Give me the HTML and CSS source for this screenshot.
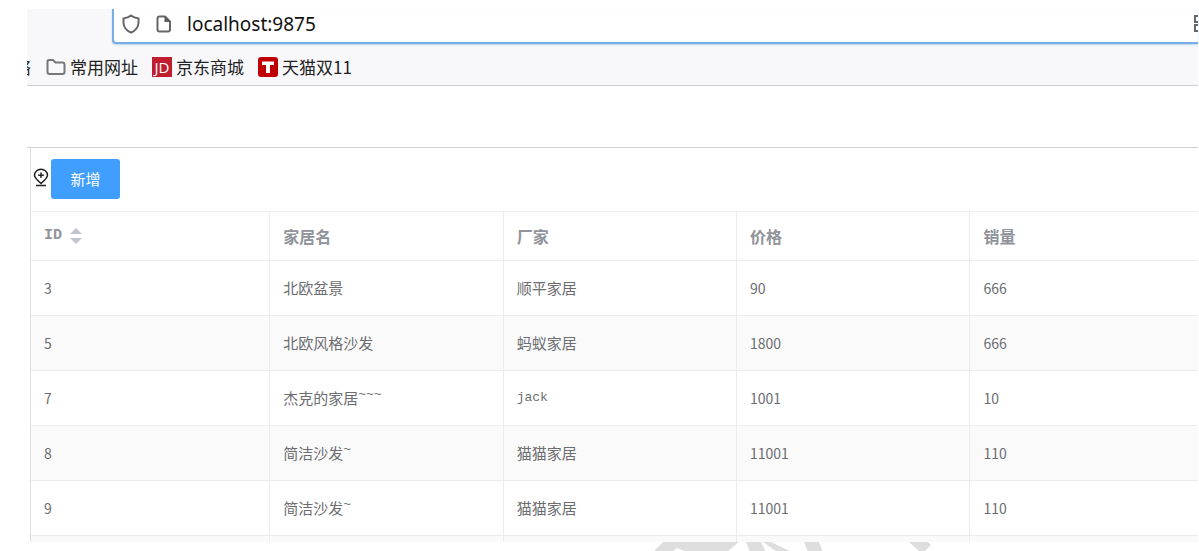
FILE: index.html
```html
<!DOCTYPE html>
<html lang="zh-CN">
<head>
<meta charset="utf-8">
<title>家居管理</title>
<link rel="stylesheet" href="styles.css">
</head>
<body>
<main class="capture">
  <header class="browser">
    <div class="address">
      <svg class="shield" viewBox="0 0 20 20" aria-hidden="true"><path d="M10 1.500Q13 4 17.500 4.500V9Q17 15.500 10 18.700Q3 15.500 2.500 9V4.500Q7 4 10 1.500Z"/></svg>
      <svg class="page-icon" viewBox="0 0 16 18" aria-hidden="true"><path d="M3.500 1.500H9L14 6.500V14.500Q14 16.500 12 16.500H3.500Q1.500 16.500 1.500 14.500V3.500Q1.500 1.500 3.500 1.500Z"/><path class="fold" d="M8.500 1V7H14.500Z"/></svg>
      <input class="url" type="text" value="localhost:9875" aria-label="地址">
      <svg class="qr" viewBox="0 0 4 20" aria-hidden="true"><path d="M5 2H1V8H5M5 11H1V17H5"/></svg>
    </div>
    <nav class="bookmarks">
      <span class="cut"><span>络</span></span>
      <a href="#"><svg class="folder" viewBox="0 0 20 18" aria-hidden="true"><path d="M1.500 3.500Q1.500 2 3 2H7L9.500 4.500H16.500Q18.500 4.500 18.500 6.500V14Q18.500 16 16.500 16H3.500Q1.500 16 1.500 14Z"/></svg>常用网址</a>
      <a href="#"><span class="logo jd">JD</span>京东商城</a>
      <a href="#"><span class="logo tmall"><svg viewBox="0 0 20 20" aria-hidden="true"><path d="M4 4.500H16V8H12V16H8V8H4Z"/></svg></span>天猫双11</a>
    </nav>
  </header>
  <section class="app">
    <div class="toolbar">
      <svg class="pin" viewBox="0 0 16 20" aria-hidden="true"><path d="M8 15.500C4.500 12.500 1.500 10 1.500 7.300A6.500 6 0 0 1 14.500 7.300C14.500 10 11.500 12.500 8 15.500ZM5.200 7.300H10.800M8 4.500V10.100M3 17.500H13"/></svg>
      <button class="add" type="button">新增</button>
    </div>
    <table class="grid">
      <colgroup><col class="wide"><col class="mid"><col class="mid"><col class="mid"><col></colgroup>
      <thead>
        <tr><th><span class="sortable">ID<svg class="sort" viewBox="0 0 12 16" aria-hidden="true"><path d="M0 6L6 0L12 6ZM0 10H12L6 16Z"/></svg></span></th><th>家居名</th><th>厂家</th><th>价格</th><th>销量</th></tr>
      </thead>
      <tbody>
        <tr><td class="num">3</td><td>北欧盆景</td><td>顺平家居</td><td class="num">90</td><td class="num">666</td></tr>
        <tr><td class="num">5</td><td>北欧风格沙发</td><td>蚂蚁家居</td><td class="num">1800</td><td class="num">666</td></tr>
        <tr><td class="num">7</td><td>杰克的家居<span class="tilde">~~~</span></td><td class="latin">jack</td><td class="num">1001</td><td class="num">10</td></tr>
        <tr><td class="num">8</td><td>简洁沙发<span class="tilde">~</span></td><td>猫猫家居</td><td class="num">11001</td><td class="num">110</td></tr>
        <tr><td class="num">9</td><td>简洁沙发<span class="tilde">~</span></td><td>猫猫家居</td><td class="num">11001</td><td class="num">110</td></tr>
        <tr class="peek"><td></td><td></td><td></td><td></td><td></td></tr>
      </tbody>
    </table>
  </section>
</main>
<div class="watermark"><svg viewBox="0 0 290 10" aria-hidden="true"><path d="M12 0H57L60 10H36L26 6L21 10H2ZM57 0H88L76 10H60ZM95 0H110L115 10H99ZM112 0H120L141 10H126ZM153 0H168L172 10H157ZM258 0H277L280 3L273 10H269Z"/></svg></div>
</body>
</html>
```
FILE: styles.css
```css
* { box-sizing: border-box; }
body { margin: 0; background: #fff; font-family: "Noto Sans CJK SC", sans-serif; }
.capture { margin: 9px 1px 0 27px; }
.browser { background: #f8f8fb; border-bottom: 1px solid #d0d0d2; }
.address { display: flex; align-items: center; height: 35px; margin-left: 85px; padding: 0 0 3px 7px; background: #fff; border: solid #78ade5; border-width: 0 0 2px 2px; border-radius: 0 0 0 4px; box-shadow: 0 1px 2px #b5d4f3; }
.address svg { flex: none; fill: none; stroke: #66666a; stroke-width: 2; }
.shield { width: 20px; height: 20px; }
.page-icon { width: 16px; height: 18px; margin-left: 15px; }
.address .fold { fill: #5b5b60; stroke: none; }
.url { flex: 1; min-width: 0; margin-left: 15px; padding: 0; border: 0; outline: 0; background: none; color: #111; font: 19px/28px "Noto Sans", sans-serif; }
.qr { width: 4px; height: 20px; }
.bookmarks { display: flex; align-items: center; height: 41px; padding-top: 5px; font-size: 17px; line-height: 24px; }
.bookmarks a { display: flex; align-items: center; margin-right: 14px; color: #222; text-decoration: none; white-space: nowrap; }
.cut { display: flex; justify-content: flex-end; width: 4px; margin-right: 15px; overflow: hidden; color: #222; }
.folder { width: 20px; height: 18px; margin-right: 4px; fill: none; stroke: #777; stroke-width: 2; }
.logo { display: grid; place-items: center; width: 20px; height: 20px; margin-right: 4px; color: #fff; font: 15px/20px "Open Sans", sans-serif; }
.jd { background: #c01d2e; }
.tmall { background: #c00000; border-radius: 3px; }
.tmall svg { width: 20px; height: 20px; fill: #fff; }
.app { margin-top: 61px; border-top: 1px solid #d0d0d0; padding-left: 3px; }
.toolbar { display: flex; align-items: center; height: 63px; padding: 0 0 1px 2px; border-left: 1px solid #ddd; }
.pin { width: 16px; height: 20px; margin: 0 2px 2px 0; fill: none; stroke: #222; stroke-width: 1.5; }
.add { width: 69px; height: 40px; padding: 0; border: 0; border-radius: 3px; background: #409eff; color: #fff; font: 15px/22px "Noto Sans CJK SC", sans-serif; }
.grid { width: 100%; table-layout: fixed; border-collapse: separate; border-spacing: 0; border-top: 1px solid #ebeef0; border-left: 1px solid #dedede; font-size: 15px; line-height: 22px; color: #6c6d70; }
.wide { width: 20.5%; }
.mid { width: 20%; }
.grid th, .grid td { height: 55px; padding: 0 13px; text-align: left; border-right: 1px solid #ececec; border-bottom: 1px solid #ececec; }
.grid th { height: 49px; color: #909399; font-size: 16px; }
.grid th:last-child, .grid td:last-child { border-right: 0; }
.grid tbody tr:nth-child(even) { background: #fafafa; }
.grid .num { font-size: 14px; }
.grid .latin { font-family: "Liberation Mono", monospace; font-size: 13px; }
.tilde { font: 13px/1 "Liberation Mono", monospace; line-height: 0; vertical-align: super; }
.sortable { display: flex; align-items: center; gap: 8px; font: bold 15px/22px "Liberation Mono", monospace; }
.sort { width: 12px; height: 16px; fill: #c0c4cc; }
.grid .peek td { height: 6px; padding: 0; border-bottom: 0; }
.watermark { height: 10px; padding-left: 651px; overflow: hidden; }
.watermark svg { display: block; width: 290px; height: 10px; fill: #dedede; }
```
